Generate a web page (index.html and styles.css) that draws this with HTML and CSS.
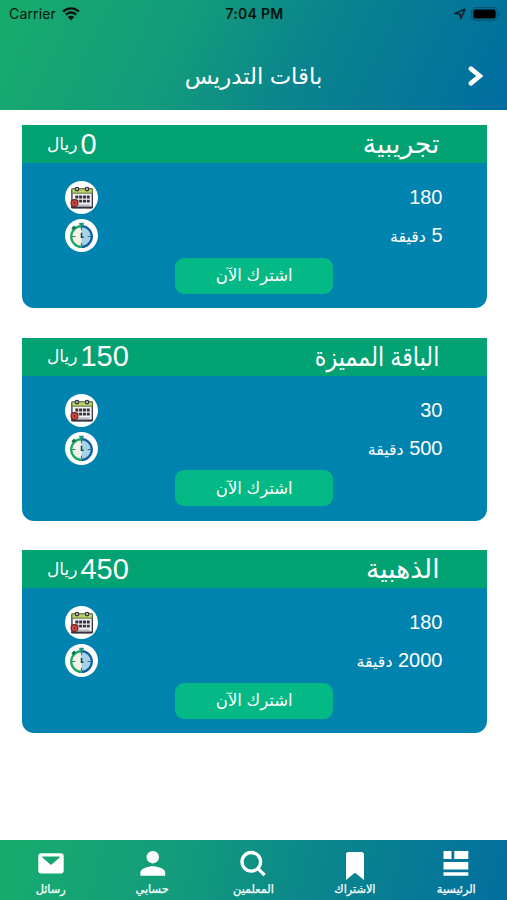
FILE: index.html
```
<!DOCTYPE html>
<html lang="ar" dir="rtl">
<head>
  <meta charset="UTF-8" />
  <meta name="viewport" content="width=device-width, initial-scale=1.0"/>
  <title>باقات التدريس</title>
  <link rel="stylesheet" href="styles.css">
</head>
<body>
  <!-- Shared icons -->
  <svg class="icon-defs" width="0" height="0">
    <symbol id="icon-calendar" viewBox="0 0 32 32">
      <rect x="6.7" y="8" width="19.8" height="18" rx="1" fill="#f4f3f6" stroke="#3d3a42" stroke-width="1.3"/>
      <rect x="6.7" y="7.6" width="19.8" height="4.2" fill="#b7d36a" stroke="#596b35" stroke-width=".9"/>
      <circle cx="11.6" cy="7.8" r="1.7" fill="#c9cbd2" stroke="#35333a" stroke-width="1.2"/>
      <circle cx="21.4" cy="7.8" r="1.7" fill="#c9cbd2" stroke="#35333a" stroke-width="1.2"/>
      <path d="M10 15.5h14.4M10 19.5h14.4" stroke="#37333c" stroke-width="2.7" stroke-dasharray="2.9 .8"/>
      <path d="M12 23.4h12" stroke="#a9adb8" stroke-width="1.2"/>
      <path d="M6 25.6h20.8" stroke="#34313b" stroke-width="1.7"/>
      <circle cx="9.2" cy="21.3" r="3.3" fill="#d9473f" stroke="#6b2529" stroke-width="1.1"/>
      <circle cx="9.2" cy="21.3" r="1" fill="#6b2529"/>
    </symbol>
    <symbol id="icon-timer" viewBox="0 0 32 32">
      <path d="M16 7.5a9.5 9.5 0 0 0 0 19z" fill="#f3f2e4"/>
      <path d="M16 7.5a9.5 9.5 0 0 1 0 19z" fill="#a5d4ea"/>
      <path d="M16 7a10 10 0 0 0 0 20" fill="none" stroke="#1ba567" stroke-width="2.2"/>
      <path d="M16 7a10 10 0 0 1 0 20" fill="none" stroke="#125f9c" stroke-width="2.2"/>
      <path d="M13.8 4.6h4.4M16 4.8v4" stroke="#168f7c" stroke-width="1.8"/>
      <path d="M7.1 9.9l2.7-2.7" stroke="#14764f" stroke-width="2.8"/>
      <path d="M16 8v3M16 23v3M7 17h3M22 17h3" stroke="#2b7286" stroke-width="1.1"/>
      <path d="M16 13.3v4.3h2" fill="none" stroke="#174b55" stroke-width="1.5"/>
    </symbol>
  </svg>

  <header class="header">
    <div class="status-bar" dir="ltr">
      <div class="carrier">
        <span>Carrier</span>
        <svg width="18" height="14" viewBox="0 0 18 14">
          <path d="M1.1 4.6a11.3 11.3 0 0 1 15.8 0M3.9 7.6a7.3 7.3 0 0 1 10.2 0" fill="none" stroke="#04130f" stroke-width="2.3"/>
          <path d="M9 13.4L5.8 10.1a4.6 4.6 0 0 1 6.4 0z" fill="#04130f"/>
        </svg>
      </div>
      <span class="time">7:04 PM</span>
      <div class="battery">
        <svg width="12" height="12" viewBox="0 0 12 12">
          <path d="M.9 5.4L11 1.2 6.8 10.6 6 6z" fill="none" stroke="#06202c" stroke-width="1.5" stroke-linejoin="round"/>
        </svg>
        <svg width="29" height="14" viewBox="0 0 29 14">
          <rect x=".7" y=".7" width="25.6" height="12.6" rx="3.8" fill="none" stroke="#075774" stroke-width="1.2"/>
          <rect x="2.4" y="2.4" width="22.2" height="9.2" rx="2.2" fill="#000"/>
          <path d="M27.4 4.8v4.4q1.3-.7 1.3-2.2t-1.3-2.2z" fill="#075774"/>
        </svg>
      </div>
    </div>
    <div class="title-bar">
      <svg class="back" width="17" height="22" viewBox="0 0 17 22">
        <path d="M3.8 3.6l9 7.4-9 7.4" fill="none" stroke="#fff" stroke-width="4.6" stroke-linecap="round"/>
      </svg>
      <h1>باقات التدريس</h1>
    </div>
  </header>

  <main class="packages">
    <section class="card">
      <div class="card-head">
        <h2>تجريبية</h2>
        <div class="price"><b>0</b><span>ريال</span></div>
      </div>
      <div class="row">
        <p>180</p>
        <svg class="badge"><use href="#icon-calendar"/></svg>
      </div>
      <div class="row">
        <p>5 <span>دقيقة</span></p>
        <svg class="badge"><use href="#icon-timer"/></svg>
      </div>
      <button>اشترك الآن</button>
    </section>

    <section class="card">
      <div class="card-head">
        <h2 class="narrow">الباقة المميزة</h2>
        <div class="price"><b>150</b><span>ريال</span></div>
      </div>
      <div class="row">
        <p>30</p>
        <svg class="badge"><use href="#icon-calendar"/></svg>
      </div>
      <div class="row">
        <p>500 <span>دقيقة</span></p>
        <svg class="badge"><use href="#icon-timer"/></svg>
      </div>
      <button>اشترك الآن</button>
    </section>

    <section class="card">
      <div class="card-head">
        <h2>الذهبية</h2>
        <div class="price"><b>450</b><span>ريال</span></div>
      </div>
      <div class="row">
        <p>180</p>
        <svg class="badge"><use href="#icon-calendar"/></svg>
      </div>
      <div class="row">
        <p>2000 <span>دقيقة</span></p>
        <svg class="badge"><use href="#icon-timer"/></svg>
      </div>
      <button>اشترك الآن</button>
    </section>
  </main>

  <nav class="tabs">
    <a>
      <svg viewBox="0 0 30 30"><path d="M2.5 1h8v8h-8zM13.3 1h14v8h-14zM2.5 12h24.8v7.5H2.5zM2.5 22.3h24.8v3.4H2.5z"/></svg>
      <span>الرئيسية</span>
    </a>
    <a>
      <svg viewBox="0 0 30 30"><path d="M6 4.6Q6 2 8.6 2h12.8Q24 2 24 4.6V30l-9-7.2L6 30z"/></svg>
      <span>الاشتراك</span>
    </a>
    <a>
      <svg viewBox="0 0 30 30"><path d="M13.3 2.5a9.3 9.3 0 1 0 0 18.6 9.3 9.3 0 0 0 0-18.6zM19.8 18.4l6.8 6.8" class="line"/></svg>
      <span>المعلمين</span>
    </a>
    <a>
      <svg viewBox="0 0 30 30"><circle cx="15.8" cy="7.2" r="6.2"/><path d="M3.4 25.7v-3.1c0-4.1 8.3-6.3 12.4-6.3s12.4 2.2 12.4 6.3v3.1z"/></svg>
      <span>حسابي</span>
    </a>
    <a>
      <svg viewBox="0 0 30 30"><path fill-rule="evenodd" d="M5.3 3.2h19.4a3 3 0 0 1 3 3v14.2a3 3 0 0 1-3 3H5.3a3 3 0 0 1-3-3V6.2a3 3 0 0 1 3-3zM6.3 6.4v1.2l8.7 7.3 8.7-7.3V6.4z"/></svg>
      <span>رسائل</span>
    </a>
  </nav>
</body>
</html>
```
FILE: styles.css
```
* {
  margin: 0;
  padding: 0;
  box-sizing: border-box;
}

body {
  display: flex;
  flex-direction: column;
  height: 900px;
  overflow: hidden;
  background: #fff;
  color: #fff;
  font-family: "Liberation Sans", "DejaVu Sans", sans-serif;
}

.icon-defs {
  position: absolute;
}

/* Header */
.header {
  height: 110.4px;
  background: linear-gradient(115deg, #17ac6d 0%, #139c7b 35%, #0a848d 60%, #006da1 100%);
}

.status-bar {
  display: grid;
  grid-template-columns: 1fr auto 1fr;
  align-items: center;
  height: 27px;
  padding: 0 7px 0 9px;
  color: #04130f;
  font-family: Inter, sans-serif;
  font-size: 14px;
}

.carrier,
.battery {
  display: flex;
  align-items: center;
  gap: 6px;
}

.carrier span {
  letter-spacing: .15px;
}

.battery {
  justify-content: flex-end;
  gap: 5px;
}

.time {
  font-weight: 600;
  letter-spacing: .3px;
}

.title-bar {
  display: grid;
  grid-template-columns: 40px 1fr 40px;
  align-items: center;
  height: 98px;
}

.back {
  justify-self: end;
}

h1 {
  font-size: 22.8px;
  font-weight: 400;
  text-align: center;
}

/* Packages */
.packages {
  display: flex;
  flex: 1;
  flex-direction: column;
  gap: 29.5px;
  padding: 15px 20.5px 0 22px;
}

.card {
  height: 183px;
  background: #0083af;
  border-radius: 0 0 12px 12px;
}

.card-head {
  display: flex;
  align-items: center;
  justify-content: space-between;
  height: 38px;
  margin-bottom: 15.2px;
  padding: 0 47px 0 25px;
  background: #02a273;
}

h2 {
  font-size: 26.5px;
  font-weight: 400;
}

h2.narrow {
  transform: scaleX(.84);
  transform-origin: right;
}

.price {
  display: flex;
  align-items: center;
  gap: 3px;
}

.price b {
  font-size: 29px;
  font-weight: 400;
}

.price span {
  font-size: 17px;
}

.row {
  display: flex;
  align-items: center;
  justify-content: space-between;
  height: 38px;
  padding: 0 44px 0 43px;
}

.row p {
  font-size: 20px;
}

.row span {
  font-size: 15.8px;
}

.badge {
  width: 33px;
  height: 33px;
  background: #fff;
  border-radius: 50%;
}

button {
  display: block;
  width: 158px;
  height: 36px;
  margin: 3px auto 0;
  background: #04b986;
  border: none;
  border-radius: 9px;
  color: #fff;
  font-family: inherit;
  font-size: 16.5px;
}

/* Bottom tabs */
.tabs {
  display: flex;
  height: 60px;
  background: linear-gradient(105deg, #17ac6d 0%, #139c7b 35%, #0a848d 65%, #026f9f 100%);
}

.tabs a {
  display: flex;
  flex: 1;
  flex-direction: column;
  align-items: center;
  gap: 3px;
  padding-top: 10px;
  font-size: 11.3px;
  -webkit-text-stroke: .25px #fff;
}

.tabs svg {
  width: 30px;
  height: 30px;
  fill: #fff;
}

.tabs .line {
  fill: none;
  stroke: #fff;
  stroke-width: 3.3;
}
```
